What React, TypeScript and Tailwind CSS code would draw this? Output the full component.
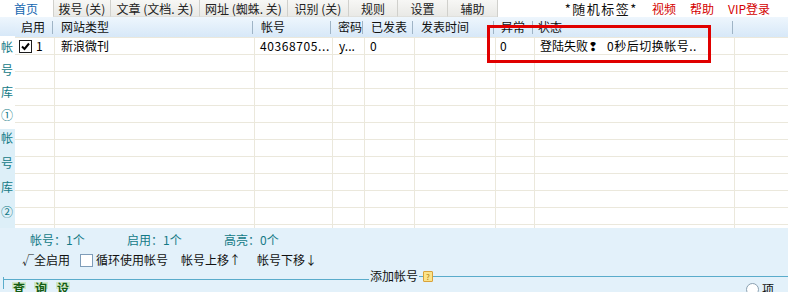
const font = { fontFamily: '"Noto Sans CJK SC", "Liberation Sans", sans-serif' };

const tabs = [
  { label: '拨号 (关)', w: 'w-[57px]' },
  { label: '文章 (文档. 关)', w: 'w-[89px]' },
  { label: '网址 (蜘蛛. 关)', w: 'w-[88px]' },
  { label: '识别 (关)', w: 'w-[61px]' },
  { label: '规则', w: 'w-[49px]' },
  { label: '设置', w: 'w-[50px]' },
  { label: '辅助', w: 'w-[50px]' },
];

const cols = [
  { label: '启用', w: 'w-[40px]', pad: 'pl-[6px]' },
  { label: '网站类型', w: 'w-[200px]', pad: 'pl-[6px]' },
  { label: '帐号', w: 'w-[78px]', pad: 'pl-[6px]' },
  { label: '密码', w: 'w-[32px]', pad: 'pl-[5px]' },
  { label: '已发表', w: 'w-[50px]', pad: 'pl-[6px]' },
  { label: '发表时间', w: 'w-[81px]', pad: 'pl-[6px]' },
  { label: '异常', w: 'w-[39px]', pad: 'pl-[5px]' },
  { label: '状态', w: 'w-[200px]', pad: 'pl-[3px]' },
  { label: '', w: 'flex-1', pad: '' },
];

const Check = ({ on, soft }: { on?: boolean; soft?: boolean }) => (
  <span className={`inline-flex items-center justify-center w-[13px] h-[13px] border bg-white shrink-0 ${soft ? 'border-[#7f9db9]' : 'border-[#1c1c1c]'}`}>
    {on && (
      <svg width="9" height="9" viewBox="0 0 9 9">
        <path d="M1 4.5 L3.5 7 L8 1.5" stroke="#000" strokeWidth="2" fill="none" />
      </svg>
    )}
  </span>
);

const Row = ({ first }: { first?: boolean }) => (
  <div className="flex h-[17px] border-b border-[#ebe8dc] text-[12px] leading-[16px] text-black">
    <div className="w-[40px] border-r border-[#ebe8dc] flex items-center gap-[4px] pl-[4px]">
      {first && (<><Check on /><span>1</span></>)}
    </div>
    <div className="w-[200px] border-r border-[#ebe8dc] pl-[6px]">{first && '新浪微刊'}</div>
    <div className="w-[78px] border-r border-[#ebe8dc] pl-[5px] tracking-[0.6px]">{first && '40368705...'}</div>
    <div className="w-[32px] border-r border-[#ebe8dc] pl-[6px]">{first && 'y...'}</div>
    <div className="w-[50px] border-r border-[#ebe8dc] pl-[5px]">{first && '0'}</div>
    <div className="w-[81px] border-r border-[#ebe8dc]"></div>
    <div className="w-[39px] border-r border-[#ebe8dc] pl-[4px]">{first && '0'}</div>
    <div className="w-[200px] border-r border-[#ebe8dc] pl-[5px] whitespace-pre">
      {first && (
        <>
          <span>登陆失败❢</span>
          <span className="ml-[9px] tracking-[0.5px]">0秒后切换帐号..</span>
        </>
      )}
    </div>
    <div className="flex-1"></div>
  </div>
);

const App = () => {
  return (
    <div className="relative w-[788px] h-[292px] overflow-hidden bg-white text-[12px]" style={font}>
      {/* tab bar */}
      <div className="flex h-[17px] items-stretch bg-white">
        <div className="w-[53px] pl-[14px] text-[#1466b0] leading-[17px]">首页</div>
        {tabs.map((t) => (
          <div key={t.label} className={`${t.w} bg-gradient-to-b from-[#f7f7f5] to-[#e9e9e6] border-l border-[#d0d0cc] border-b border-b-[#e0e0dc] leading-[17px] text-center whitespace-pre text-[#222]`}>
            {t.label}
          </div>
        ))}
        <div className="border-l border-[#d0d0cc]"></div>
        <div className="flex-1 flex justify-end gap-[14px] pr-[18px] leading-[17px]">
          <span className="text-[#111] text-[13px] tracking-[1.5px]">*随机标签*</span>
          <span className="text-[#d40000]">视频</span>
          <span className="text-[#d40000]">帮助</span>
          <span className="text-[#d40000]">VIP登录</span>
        </div>
      </div>

      <div className="flex h-[211px]">
        {/* sidebar */}
        <div className="w-[15px] flex flex-col text-[#137a86] text-[12px]">
          <div className="h-[20px] bg-gradient-to-b from-[#eef6fd] to-[#d7e8f8]"></div>
          <div className="h-[93px] bg-white flex flex-col pt-[3px]">
            {['帐', '号', '库', '①'].map((c, i) => (
              <div key={i} className="h-[24.5px] pl-[1px] leading-[16px]">{c}</div>
            ))}
          </div>
          <div className="flex-1 bg-[#ddeff8] flex flex-col pt-[1px]">
            {['帐', '号', '库', '②'].map((c, i) => (
              <div key={i} className="h-[24.5px] pl-[1px] leading-[16px]">{c}</div>
            ))}
          </div>
        </div>

        {/* table */}
        <div className="flex-1 flex flex-col">
          <div className="flex h-[20px] bg-gradient-to-b from-[#eef6fd] to-[#d7e8f8] text-[#111] leading-[20px]">
            {cols.map((c, i) => (
              <div key={i} className={`${c.w} ${c.pad} relative whitespace-nowrap overflow-hidden`}>
                {c.label}
                {c.label && <span className="absolute right-[2px] top-[4px] h-[13px] w-px bg-[#9fb4c6]"></span>}
              </div>
            ))}
          </div>
          <div className="flex-1 bg-white overflow-hidden border-t border-[#ebe8dc]">
            {Array.from({ length: 12 }).map((_, i) => (
              <Row key={i} first={i === 0} />
            ))}
          </div>
        </div>
      </div>

      {/* bottom panel */}
      <div className="h-[64px] bg-[#e3f1fa] pt-[3px]">
        <div className="flex h-[17px] items-center text-[#137a86] pl-[30px] leading-[17px]">
          <span className="w-[97px]">帐号：1个</span>
          <span className="w-[97px]">启用：1个</span>
          <span>高亮：0个</span>
        </div>
        <div className="flex h-[22px] items-center pl-[22px] text-[#111] mt-[1px]">
          <span className="w-[58px]">√全启用</span>
          <Check soft />
          <span className="ml-[3px] w-[85px]">循环使用帐号</span>
          <span className="w-[76px]">帐号上移↑</span>
          <span>帐号下移↓</span>
        </div>
        <div className="flex items-center h-[10px] pl-[3px]">
          <div className="w-[366px] h-px bg-[#5aaccb] mt-[6px]"></div>
          <span className="px-[1px] text-[#111] leading-[12px]">添加帐号</span>
          <div className="w-[4px] h-px bg-[#5aaccb]"></div>
          <span className="w-[10px] h-[11px] bg-[#fbe38a] border border-[#d9a23a] rounded-[1px] text-[8px] leading-[9px] text-center text-[#b07d10]">?</span>
          <div className="flex-1 h-px bg-[#5aaccb]"></div>
        </div>
        <div className="flex h-[12px] border-l border-[#5aaccb] ml-[3px] mt-[-4px] pt-[5px] overflow-visible">
          <div className="flex gap-[8px] pl-[8px] text-[#135c13] font-bold">
            <span className="bg-[#cfe8c8] leading-[12px] px-[1px]">查</span>
            <span className="bg-[#cfe8c8] leading-[12px] px-[1px]">询</span>
            <span className="bg-[#cfe8c8] leading-[12px] px-[1px]">设</span>
          </div>
          <div className="flex-1"></div>
          <div className="flex items-start gap-[3px] pr-[14px]">
            <span className="w-[13px] h-[13px] rounded-full border border-[#8aa0b0] bg-white mt-[1px]"></span>
            <span className="leading-[14px] text-[#111]">项</span>
          </div>
        </div>
      </div>

      {/* highlight box */}
      <div className="absolute left-[487px] top-[25px] w-[224px] h-[38px] border-[3px] border-[#e00000]"></div>
    </div>
  );
};

export default App;
